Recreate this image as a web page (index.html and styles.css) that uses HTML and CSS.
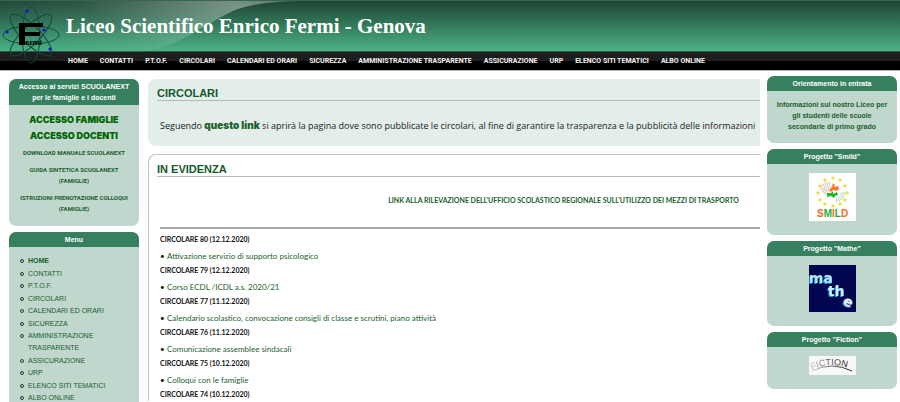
FILE: index.html
```html
<!DOCTYPE html>
<html lang="it">
<head>
<meta charset="utf-8">
<title>Liceo Scientifico Enrico Fermi - Genova</title>
<link rel="stylesheet" href="styles.css">
</head>
<body>
<div class="page">
  <header class="banner">
    <svg class="wave" width="300" height="51" viewBox="0 0 300 51" aria-hidden="true">
      <defs>
        <linearGradient id="sheen" x1="0" y1="0.3" x2="1" y2="0">
          <stop offset="0" stop-color="#fff" stop-opacity="0"/>
          <stop offset="0.3" stop-color="#fff" stop-opacity="0.06"/>
          <stop offset="0.8" stop-color="#fff" stop-opacity="0.4"/>
          <stop offset="1" stop-color="#fff" stop-opacity="0.25"/>
        </linearGradient>
      </defs>
      <path d="M0 0H297C262 1 245 5 233 10C218 17 210 23 200 28C190 34 183 38 173 42C163 46 155 49 143 51H0Z" fill="url(#sheen)"/>
    </svg>
    <svg class="logo" width="60" height="60" viewBox="0 0 60 60" role="img" aria-label="Fermi">
      <g fill="none" stroke="#0d4a45" stroke-width="1">
        <ellipse cx="29" cy="31" rx="28" ry="9"/>
        <ellipse cx="29" cy="31" rx="28" ry="9" transform="rotate(45 29 31)"/>
        <ellipse cx="29" cy="31" rx="28" ry="9" transform="rotate(90 29 31)"/>
        <ellipse cx="29" cy="31" rx="28" ry="9" transform="rotate(135 29 31)"/>
      </g>
      <path d="M17 19H41V23H23V28H38V32H23V41H17Z" fill="#000"/>
      <text class="logo-text" x="23" y="41">ermi</text>
      <g fill="#1212d8">
        <circle cx="25" cy="7" r="1.6"/><circle cx="5" cy="28" r="1.6"/>
        <circle cx="42" cy="26" r="1.6"/><circle cx="48" cy="45" r="1.6"/>
      </g>
    </svg>
    <h1>Liceo Scientifico Enrico Fermi - Genova</h1>
  </header>
  <nav class="topnav">
    <a href="#">HOME</a><a href="#">CONTATTI</a><a href="#">P.T.O.F.</a><a href="#">CIRCOLARI</a><a href="#">CALENDARI ED ORARI</a><a href="#">SICUREZZA</a><a href="#">AMMINISTRAZIONE TRASPARENTE</a><a href="#">ASSICURAZIONE</a><a href="#">URP</a><a href="#">ELENCO SITI TEMATICI</a><a href="#">ALBO ONLINE</a>
  </nav>
  <div class="columns">
    <aside class="side left">
      <section class="box">
        <h2>Accesso ai servizi SCUOLANEXT<br>per le famiglie e i docenti</h2>
        <div class="access">
          <a class="big" href="#">ACCESSO FAMIGLIE</a>
          <a class="big" href="#">ACCESSO DOCENTI</a>
          <a class="small" href="#">DOWNLOAD MANUALE SCUOLANEXT</a>
          <a class="small" href="#">GUIDA SINTETICA SCUOLANEXT<br>(FAMIGLIE)</a>
          <a class="small" href="#">ISTRUZIONI PRENOTAZIONE COLLOQUI<br>(FAMIGLIE)</a>
        </div>
      </section>
      <section class="box">
        <h2>Menu</h2>
        <ul class="menu">
          <li><a class="current" href="#">HOME</a></li>
          <li><a href="#">CONTATTI</a></li>
          <li><a href="#">P.T.O.F.</a></li>
          <li><a href="#">CIRCOLARI</a></li>
          <li><a href="#">CALENDARI ED ORARI</a></li>
          <li><a href="#">SICUREZZA</a></li>
          <li><a href="#">AMMINISTRAZIONE<br>TRASPARENTE</a></li>
          <li><a href="#">ASSICURAZIONE</a></li>
          <li><a href="#">URP</a></li>
          <li><a href="#">ELENCO SITI TEMATICI</a></li>
          <li><a href="#">ALBO ONLINE</a></li>
        </ul>
      </section>
    </aside>
    <main class="main">
      <section class="panel tinted">
        <h2>CIRCOLARI</h2>
        <p>Seguendo <a href="#">questo link</a> si aprirà la pagina dove sono pubblicate le circolari, al fine di garantire la trasparenza e la pubblicità delle informazioni</p>
      </section>
      <section class="panel outlined">
        <h2>IN EVIDENZA</h2>
        <a class="survey" href="#">LINK ALLA RILEVAZIONE DELL'UFFICIO SCOLASTICO REGIONALE SULL'UTILIZZO DEI MEZZI DI TRASPORTO</a>
        <div class="news">
          <h3>CIRCOLARE 80 (12.12.2020)</h3>
          <ul><li><a href="#">Attivazione servizio di supporto psicologico</a></li></ul>
          <h3>CIRCOLARE 79 (12.12.2020)</h3>
          <ul><li><a href="#">Corso ECDL /ICDL a.s. 2020/21</a></li></ul>
          <h3>CIRCOLARE 77 (11.12.2020)</h3>
          <ul><li><a href="#">Calendario scolastico, convocazione consigli di classe e scrutini, piano attività</a></li></ul>
          <h3>CIRCOLARE 76 (11.12.2020)</h3>
          <ul><li><a href="#">Comunicazione assemblee sindacali</a></li></ul>
          <h3>CIRCOLARE 75 (10.12.2020)</h3>
          <ul><li><a href="#">Colloqui con le famiglie</a></li></ul>
          <h3>CIRCOLARE 74 (10.12.2020)</h3>
        </div>
      </section>
    </main>
    <aside class="side right">
      <section class="box">
        <h2>Orientamento in entrata</h2>
        <a class="info" href="#">Informazioni sul nostro Liceo per gli studenti delle scuole secondarie di primo grado</a>
      </section>
      <section class="box">
        <h2>Progetto "Smild"</h2>
        <a class="pic" href="#">
          <svg width="47" height="48" viewBox="0 0 47 48" role="img" aria-label="Smild">
            <rect width="47" height="48" fill="#fff"/>
            <g fill="none" stroke-width="5" stroke-dasharray="1 1">
              <path d="M13 17Q14 11 21 11" stroke="#e3c9c0"/>
              <path d="M27 27Q34 26 34 19" stroke="#bfe0bd"/>
              <path d="M15 20Q18 15 22 16" stroke="#d9c3b8"/>
            </g>
            <defs><path id="star" d="M0-2.4L.7-.8 2.3-.7 1.1.4 1.5 2 0 1.1-1.5 2-1.1.4-2.3-.7-.7-.8Z"/></defs>
            <g fill="#ecdc3c">
              <use href="#star" x="24" y="5"/><use href="#star" x="31" y="7"/><use href="#star" x="36" y="13"/><use href="#star" x="38" y="20"/><use href="#star" x="36" y="27"/><use href="#star" x="31" y="31"/><use href="#star" x="24" y="33"/><use href="#star" x="16" y="31"/><use href="#star" x="11" y="27"/><use href="#star" x="9" y="20"/><use href="#star" x="11" y="13"/><use href="#star" x="16" y="7"/>
            </g>
            <path d="M24 10L26 12L25 14L29 13L30 16L28 18L24 17L22 19L20 17L23 14Z" fill="#f47a2c"/>
            <path d="M18 20L22 20L24 18L24 21L28 19L29 22L26 23L25 25L22 23L18 24Z" fill="#24b52b"/>
            <text class="smild" x="8" y="44"><tspan fill="#f26b21">S</tspan><tspan fill="#27ae38">M</tspan><tspan fill="#f26b21">I</tspan><tspan fill="#27ae38">L</tspan><tspan fill="#f26b21">D</tspan></text>
          </svg>
        </a>
      </section>
      <section class="box">
        <h2>Progetto "Mathe"</h2>
        <a class="pic" href="#">
          <svg class="mathe" width="47" height="47" viewBox="0 0 47 47" role="img" aria-label="Mathe">
            <rect width="47" height="47" fill="#020550"/>
            <text x="0" y="18" fill="#b9e8fb">ma</text>
            <text x="19" y="31" fill="#d0f1fd">th</text>
            <text x="35" y="41" fill="#fff" transform="rotate(25 38 36)">e</text>
          </svg>
        </a>
      </section>
      <section class="box">
        <h2>Progetto "Fiction"</h2>
        <a class="pic" href="#">
          <svg class="fiction" width="47" height="19" viewBox="0 0 47 19" role="img" aria-label="Fiction">
            <defs><linearGradient id="ink"><stop offset="0" stop-color="#ccc"/><stop offset="0.5" stop-color="#666"/><stop offset="1" stop-color="#222"/></linearGradient></defs>
            <rect width="47" height="19" fill="#f8f8f6"/>
            <path id="arc" d="M3 14Q23 4 45 14" fill="none"/>
            <text fill="url(#ink)"><textPath href="#arc">FICTION</textPath></text>
            <path d="M3 15Q23 5 43 15" fill="none" stroke="url(#ink)" stroke-width="1"/>
          </svg>
        </a>
      </section>
    </aside>
  </div>
</div>
</body>
</html>
```
FILE: styles.css
```css
* { box-sizing: border-box; }
body { margin: 0; background: #fff; font-family: "Liberation Sans", Arial, sans-serif; }
h1, h2, h3, p, ul { margin: 0; padding: 0; }
a { color: #1b5e2c; text-decoration: none; }
.page { display: flex; flex-direction: column; height: 100vh; overflow: hidden; }

.banner {
  position: relative;
  flex: none;
  height: 52px;
  padding: 12px 0 0 66px;
  border-top: 1px solid #35664f;
  border-bottom: 1px solid #2b5c46;
  background: linear-gradient(#1e4535, #4bb184);
}
.banner h1 {
  position: relative;
  color: #fff;
  font: bold 21px/26px "Liberation Serif", Georgia, serif;
}
.wave { position: absolute; left: 0; top: 0; }
.logo { position: absolute; left: 2px; top: 3px; z-index: 2; }
.logo-text { font: bold 8px "Liberation Sans", sans-serif; }

.topnav {
  display: flex;
  flex: none;
  gap: 12px;
  height: 19px;
  padding-left: 68px;
  border-bottom: 1px solid #b4b4b4;
  background: linear-gradient(#1e1e1e 50%, #000 50%);
}
.topnav a { color: #f2f2f2; font: bold 7px/18px Roboto, Arial, sans-serif; white-space: nowrap; }

.columns {
  display: grid;
  grid-template-columns: 130px minmax(0, 1fr) 130px;
  flex: 1;
  min-height: 0;
  padding: 0 3px 0 9px;
}
.side { display: flex; flex-direction: column; gap: 6px; }
.left { padding-top: 8px; }
.right { padding-top: 5px; }
.box { flex: none; border-radius: 7px; background: #bfd7cd; overflow: hidden; text-align: center; }
.box h2 { padding: 2px 0; background: #37805f; color: #fff; font-size: 7px; line-height: 11px; }

.access { padding: 7px 0 6px; }
.access a { display: block; font-weight: bold; }
.access .big { color: #006400; font: 900 9px/16px Inter, "Arial Black", sans-serif; }
.access .small { margin-bottom: 6px; font: bold 6px/11px Roboto, Arial, sans-serif; }
.access .big + .small { padding-top: 3px; }

.menu { padding: 8px 0 8px 19px; font-size: 7px; line-height: 12px; text-align: left; list-style: none; }
.menu li { position: relative; }
.menu li:nth-child(odd) { margin-bottom: 1px; }
.menu li::before {
  content: "";
  position: absolute;
  left: -8px;
  top: 4px;
  width: 2px;
  height: 2px;
  border: 1px solid #333;
  border-radius: 50%;
}
.menu .current { font-weight: bold; }

.main { display: flex; flex-direction: column; gap: 8px; padding: 8px 7px 0 9px; }
.panel { flex: none; padding-left: 9px; border-radius: 8px 0 0 8px; }
.panel h2 { color: #14592a; font-size: 11px; line-height: 14px; border-bottom: 1px solid #b0bab6; }
.tinted { padding-top: 7px; padding-bottom: 13px; background: #e3eeea; }
.tinted p { padding: 17px 0 0 3px; color: #222; font: 9px/14px "Open Sans", Arial, sans-serif; white-space: nowrap; }
.tinted p a { font: 900 10px/14px Inter, "Arial Black", sans-serif; }
.outlined { padding-top: 7px; padding-left: 8px; border: 1px solid #c4c4c4; border-right: 0; border-bottom: 0; border-radius: 8px 0 0; }
.survey { display: block; padding: 17px 21px 21px 0; text-align: right; font: bold 7px/12px Lato, sans-serif; }
.news { margin-left: 3px; padding-top: 3px; border-top: 2px solid #aaa; font-family: Lato, Calibri, sans-serif; }
.news h3 { color: #111; font-size: 7px; line-height: 14px; }
.news ul { padding: 3px 0 0 7px; font-size: 8px; line-height: 14px; list-style: none; }
.news li::before { content: "•"; display: inline-block; width: 7px; margin-left: -7px; color: #111; }

.info { display: block; padding: 8px 8px 11px; font-size: 7px; line-height: 11px; font-weight: bold; }
.pic { display: block; padding: 9px 0 14px; }
.pic svg { display: block; margin: 0 auto; }
.smild { font: bold 10px "Liberation Sans", sans-serif; }
.mathe text { font: bold 14px "DejaVu Sans", sans-serif; filter: drop-shadow(-1px 1px 0 #189be0); }
.fiction text { font: 9px "Liberation Sans", sans-serif; }
```
